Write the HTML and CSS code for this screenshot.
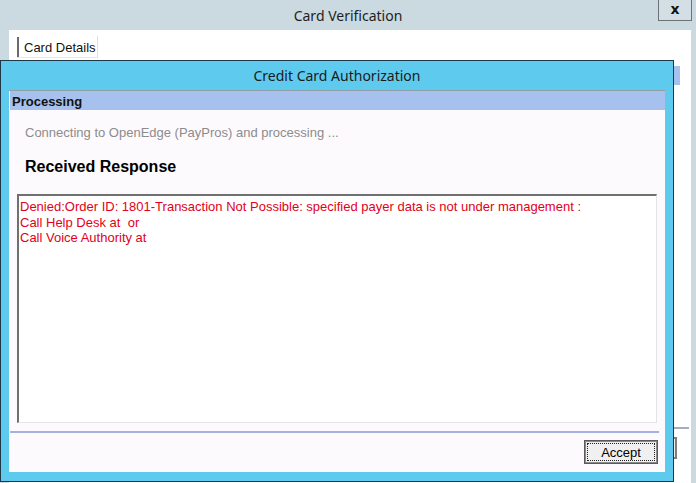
FILE: index.html
```html
<!DOCTYPE html>
<html>
<head>
<meta charset="utf-8">
<link rel="stylesheet" href="styles.css">
</head>
<body>
<div class="bgwin">
  <div class="bg-title">
    <span class="bg-title-text">Card Verification</span>
    <span class="close">x</span>
  </div>
  <div class="bg-client">
    <div class="tab"><span class="tab-text">Card Details</span></div>
    <div class="bg-band"></div>
    <div class="bg-spacer"></div>
    <div class="bg-line"></div>
    <div class="bg-btnrow"><div class="bg-btn"></div></div>
  </div>
</div>

<div class="dialog">
  <div class="dlg-title">Credit Card Authorization</div>
  <div class="dlg-client">
    <div class="section">Processing</div>
    <div class="connecting">Connecting to OpenEdge (PayPros) and processing ...</div>
    <div class="received">Received Response</div>
    <div class="response">Denied:Order ID: 1801-Transaction Not Possible: specified payer data is not under management :<br>Call Help Desk at&nbsp; or<br>Call Voice Authority at</div>
    <div class="sep"></div>
    <div class="btnrow"><button class="accept"><span class="focus">Accept</span></button></div>
  </div>
</div>
</body>
</html>
```

FILE: styles.css
```css
html, body {
  margin: 0;
  padding: 0;
}
body {
  width: 696px;
  height: 483px;
  overflow: hidden;
  position: relative;
  font-family: "Liberation Sans", Arial, sans-serif;
  font-size: 13px;
  background: #cbd9e1;
}
.bgwin {
  width: 696px;
  height: 483px;
  background: #cbd9e1;
  display: flex;
  flex-direction: column;
}
.bg-title {
  height: 30px;
  position: relative;
  display: flex;
  align-items: center;
  justify-content: center;
}
.bg-title-text {
  font-family: "Noto Sans", "Open Sans", sans-serif;
  font-size: 14px;
  color: #1e1e1e;
  margin-top: 1px;
}
.close {
  position: absolute;
  right: 4px;
  top: 0;
  width: 32px;
  height: 20px;
  border: 1px solid #6b7378;
  border-top: none;
  background: #d3dee5;
  font-family: "DejaVu Sans", sans-serif;
  font-weight: bold;
  font-size: 14px;
  line-height: 18px;
  text-align: center;
  color: #111;
}
.bg-client {
  flex: 1;
  margin-left: 9px;
  margin-right: 5px;
  background: #ffffff;
  padding-top: 6px;
}
.tab {
  margin-left: 8px;
  width: 81px;
  height: 22px;
  border-right: 1px solid #e0e0e0;
  border-bottom: 1px solid #e8e8e8;
  display: flex;
  align-items: center;
  box-sizing: border-box;
}
.tab-text {
  border-left: 2px solid #6a6a6a;
  height: 20px;
  line-height: 21px;
  padding-left: 5px;
  color: #111;
}
.bg-band {
  margin-top: 8px;
  margin-left: 1px;
  width: 670px;
  height: 19px;
  background: #a7c1ee;
}
.bg-spacer {
  height: 342px;
}
.bg-line {
  width: 680px;
  height: 2px;
  background: #a4acc0;
}
.bg-btnrow {
  margin-top: 8px;
  height: 22px;
}
.bg-btn {
  margin-left: 594px;
  width: 74px;
  height: 22px;
  box-sizing: border-box;
  border: 2px solid #7d7d7d;
  background: #efefef;
}

.dialog {
  position: absolute;
  left: 0;
  top: 60px;
  width: 674px;
  height: 422px;
  box-sizing: border-box;
  border: 1px solid #1d3848;
  background: #5ecbee;
  padding: 0 8px 9px 8px;
  display: flex;
  flex-direction: column;
}
.dlg-title {
  height: 29px;
  display: flex;
  align-items: center;
  justify-content: center;
  font-family: "Noto Sans", "Open Sans", sans-serif;
  font-size: 14px;
  color: #1a1a1a;
  margin-left: -8px;
  margin-right: -8px;
}
.dlg-client {
  flex: 1;
  background: #fdfafd;
  border-top: 1px solid #8fa0a8;
  display: flex;
  flex-direction: column;
}
.section {
  margin-left: 1px;
  height: 19px;
  background: #a7c1ee;
  font-weight: bold;
  font-size: 13px;
  line-height: 21px;
  padding-left: 2px;
  color: #111;
}
.connecting {
  margin-top: 15px;
  padding-left: 16px;
  color: #8c8c8c;
  line-height: 15px;
}
.received {
  margin-top: 17px;
  padding-left: 16px;
  font-weight: bold;
  font-size: 16px;
  line-height: 19px;
  color: #000;
}
.response {
  margin-top: 18px;
  margin-left: 8px;
  width: 640px;
  height: 229px;
  box-sizing: border-box;
  background: #ffffff;
  border-top: 2px solid #707070;
  border-left: 2px solid #707070;
  border-right: 1px solid #e4e4e4;
  border-bottom: 1px solid #e4e4e4;
  color: #e2001a;
  line-height: 15.5px;
  padding: 3px 0 0 1px;
}
.sep {
  margin-top: 8px;
  margin-left: 1px;
  width: 649px;
  height: 2px;
  background: #a6b0dc;
}
.btnrow {
  margin-top: 7px;
  display: flex;
  justify-content: flex-end;
  padding-right: 7px;
}
.accept {
  width: 74px;
  height: 24px;
  box-sizing: border-box;
  border: 1px solid #5a5a5a;
  box-shadow: inset 0 0 0 1px #8a8a8a;
  background: #f0f0f0;
  padding: 2px;
  margin: 0;
  font-family: "Liberation Sans", Arial, sans-serif;
  font-size: 13px;
  color: #000;
  display: flex;
}
.focus {
  flex: 1;
  border: 1px dotted #202020;
  line-height: 17px;
  text-align: center;
}
```
